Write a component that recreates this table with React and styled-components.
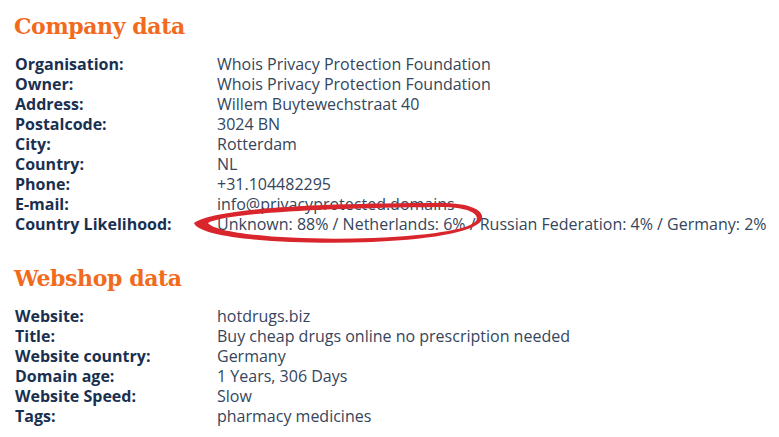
import React from 'react';
import styled, { createGlobalStyle } from 'styled-components';

const GlobalStyle = createGlobalStyle`
  body {
    margin: 0;
    background: #fff;
    font-family: "Open Sans", "Liberation Sans", sans-serif;
  }
`;

const Page = styled.div`
  width: 779px;
  height: 437px;
  padding: 9px 0 0 15px;
  box-sizing: border-box;
  overflow: hidden;
`;

const Section = styled.section`
  margin-bottom: 27px;
`;

const Heading = styled.h2`
  margin: 0 0 10px -1px;
  font-family: "DejaVu Serif", "Liberation Serif", serif;
  font-weight: bold;
  font-size: 22px;
  line-height: 35px;
  color: #f26b1d;
  letter-spacing: -0.4px;
`;

const Table = styled.div`
  display: grid;
  grid-template-columns: 202px auto;
  grid-auto-rows: 20px;
  font-size: 16px;
  line-height: 20px;
  white-space: nowrap;
`;

const Label = styled.div`
  font-weight: 700;
  color: #1a3050;
`;

const Value = styled.div`
  position: relative;
  color: #34455c;
`;

const Marker = styled.svg`
  position: absolute;
  left: -25px;
  top: -12px;
  width: 300px;
  height: 45px;
  overflow: visible;
  pointer-events: none;
`;

const HandCircle = () => (
  <Marker viewBox="0 0 300 45">
    <path
      fillRule="evenodd"
      fill="#d8262c"
      d="M2,21 C20,7 120,1 248,1 C284,1 294,11 289,19 C283,28 250,37 180,40 C100,43 8,37 2,21 Z
         M16,21 C32,12 120,6 248,5 C279,5 288,13 284,19 C278,26 250,33 180,36 C100,39 24,32 16,21 Z"
    />
  </Marker>
);

const company = [
  ['Organisation:', 'Whois Privacy Protection Foundation'],
  ['Owner:', 'Whois Privacy Protection Foundation'],
  ['Address:', 'Willem Buytewechstraat 40'],
  ['Postalcode:', '3024 BN'],
  ['City:', 'Rotterdam'],
  ['Country:', 'NL'],
  ['Phone:', '+31.104482295'],
  ['E-mail:', 'info@privacyprotected.domains'],
];

const webshop = [
  ['Website:', 'hotdrugs.biz'],
  ['Title:', 'Buy cheap drugs online no prescription needed'],
  ['Website country:', 'Germany'],
  ['Domain age:', '1 Years, 306 Days'],
  ['Website Speed:', 'Slow'],
  ['Tags:', 'pharmacy medicines'],
];

const Rows = ({ items }) =>
  items.map(([label, value]) => (
    <React.Fragment key={label}>
      <Label>{label}</Label>
      <Value>{value}</Value>
    </React.Fragment>
  ));

export default function App() {
  return (
    <Page>
      <GlobalStyle />
      <Section>
        <Heading>Company data</Heading>
        <Table>
          <Rows items={company} />
          <Label>Country Likelihood:</Label>
          <Value>
            Unknown: 88% / Netherlands: 6% / Russian Federation: 4% / Germany: 2%
            <HandCircle />
          </Value>
        </Table>
      </Section>
      <Section>
        <Heading>Webshop data</Heading>
        <Table>
          <Rows items={webshop} />
        </Table>
      </Section>
    </Page>
  );
}
